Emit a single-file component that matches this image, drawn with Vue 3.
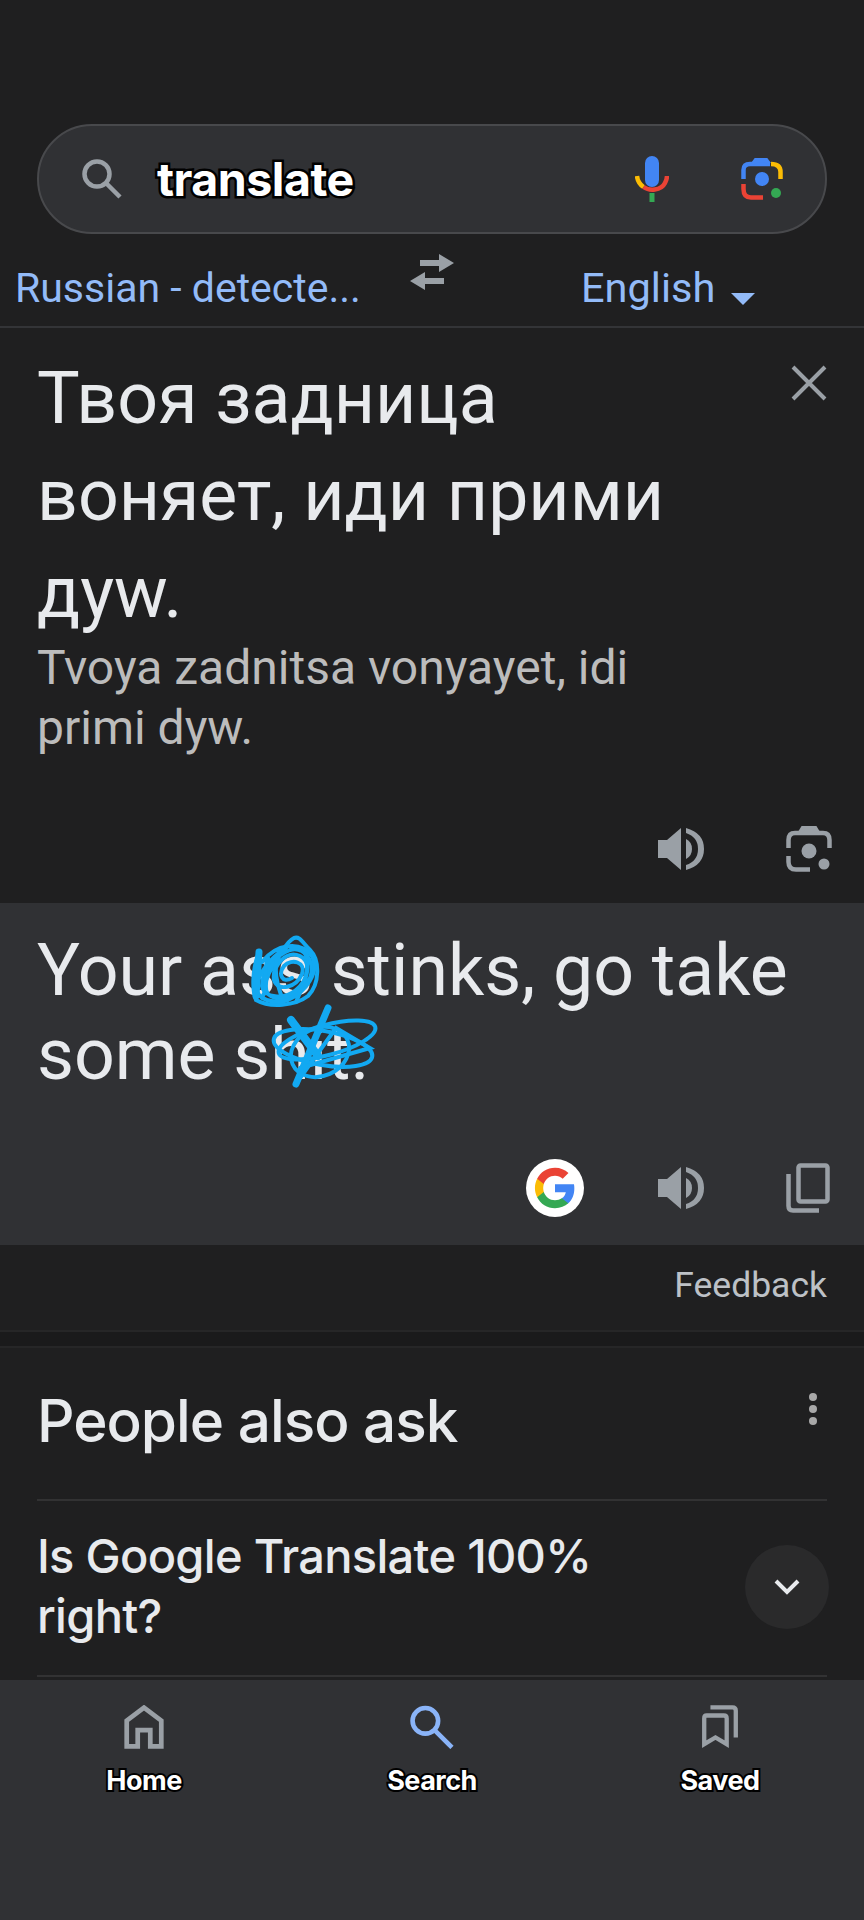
<script setup>
const tabs = [
  { label: 'Home', active: false },
  { label: 'Search', active: true },
  { label: 'Saved', active: false }
]
const knot = [
  [327, 1040, 50, 15, -15], [323, 1048, 50, 17, 10], [320, 1052, 30, 24, -24]
]
</script>

<template>
  <div class="page">
    <div class="search-bar">
      <svg class="search-icon" viewBox="0 0 40 40" fill="none" stroke="#9aa0a6" stroke-width="4.5">
        <circle cx="15" cy="15" r="12.5" />
        <path d="M24 24 L38 38" />
      </svg>
      <span class="query">translate</span>
      <svg class="mic" viewBox="0 0 34 46" fill="none">
        <rect x="10" y="0" width="14" height="31" rx="7" fill="#4285f4" />
        <path d="M2 20 C2.5 25 5 28.5 8.5 31" stroke="#fbbc04" stroke-width="4.5" />
        <path d="M8.5 31 C14 35 26 35 30 27 C31 25 32 22.5 32 20" stroke="#ea4335" stroke-width="4.5" />
        <rect x="14.5" y="37" width="5" height="9" fill="#34a853" />
      </svg>
      <svg class="lens" viewBox="0 0 42 42" fill="none" stroke-width="4.5">
        <path d="M2.5 21 V12 Q2.5 6 9 6 H29" stroke="#4285f4" />
        <path d="M12 6 L15 2 H25 L28 6" fill="#4285f4" stroke="#4285f4" />
        <path d="M30 6 Q39.5 6 39.5 14 V21" stroke="#fbbc04" />
        <path d="M2.5 26 V31 Q2.5 39.5 10 39.5 H22" stroke="#ea4335" />
        <circle cx="21" cy="21" r="7" fill="#4285f4" stroke="none" />
        <circle cx="35" cy="35" r="5" fill="#34a853" stroke="none" />
      </svg>
    </div>

    <div class="lang-bar">
      <span class="lang-from">Russian - detecte...</span>
      <svg class="swap" viewBox="0 0 46 36" fill="#9aa0a6">
        <path d="M30 0 L45 9 L30 18 V12 H11 V6 H30 Z" />
        <path d="M16 18 L1 27 L16 36 V30 H35 V24 H16 Z" />
      </svg>
      <span class="lang-to">English</span>
      <span class="caret"></span>
    </div>

    <div class="source">
      <div class="source-text">
        <div class="source-lines">Твоя задница воняет, иди прими дyw.</div>
        <svg class="close" viewBox="0 0 36 36" stroke="#9aa0a6" stroke-width="4" fill="none">
          <path d="M2 2 L34 34 M34 2 L2 34" />
        </svg>
      </div>
      <div class="translit">Tvoya zadnitsa vonyayet, idi<br />primi dyw.</div>
      <div class="actions source-actions">
        <svg class="speaker" viewBox="0 0 46 44" fill="#9aa0a6">
          <path d="M0 13 H9 L23 1 V43 L9 31 H0 Z" />
          <path d="M28 12 Q34 15 34 22 Q34 29 28 32 Z" />
          <path d="M28 1 Q46 6 46 22 Q46 38 28 43 V38 Q40 34 40 22 Q40 10 28 6 Z" />
        </svg>
        <svg class="lens-grey" viewBox="0 0 46 46" fill="none" stroke="#9aa0a6" stroke-width="4.5">
          <path d="M2.5 22 V14 Q2.5 7 9 7 H37 Q43.5 7 43.5 14 V22" />
          <path d="M14 7 L17 2 H29 L32 7" fill="#9aa0a6" />
          <path d="M2.5 30 V36 Q2.5 43.5 10 43.5 H24" />
          <circle cx="23" cy="25" r="7.5" fill="#9aa0a6" stroke="none" />
          <circle cx="38" cy="38" r="5.5" fill="#9aa0a6" stroke="none" />
        </svg>
      </div>
    </div>

    <div class="target">
      <div class="target-text">Your ass stinks, go take<br />some shit.</div>
      <div class="actions target-actions">
        <span class="g-badge">
          <svg viewBox="0 0 48 48">
            <path fill="#4285f4" d="M45.1 24.5c0-1.6-.1-3.100-.4-4.500H24v8.500h11.800c-.5 2.800-2 5.100-4.400 6.700v5.500h7.100c4.200-3.800 6.600-9.500 6.600-16.200z" />
            <path fill="#34a853" d="M24 46c5.900 0 10.900-2 14.500-5.300l-7.100-5.500c-2 1.300-4.500 2.100-7.400 2.100-5.700 0-10.500-3.800-12.200-9H4.500v5.700C8.100 41.200 15.500 46 24 46z" />
            <path fill="#fbbc05" d="M11.800 28.300c-.4-1.300-.7-2.800-.7-4.300s.3-3 .7-4.300V14H4.500C3 17 2.100 20.400 2.100 24s.9 7 2.400 10l7.300-5.700z" />
            <path fill="#ea4335" d="M24 10.700c3.200 0 6.100 1.100 8.400 3.300l6.300-6.300C34.900 4.100 29.900 2 24 2 15.500 2 8.100 6.800 4.500 14l7.300 5.700c1.700-5.200 6.500-9 12.200-9z" />
          </svg>
        </span>
        <svg class="speaker" viewBox="0 0 46 44" fill="#9aa0a6">
          <path d="M0 13 H9 L23 1 V43 L9 31 H0 Z" />
          <path d="M28 12 Q34 15 34 22 Q34 29 28 32 Z" />
          <path d="M28 1 Q46 6 46 22 Q46 38 28 43 V38 Q40 34 40 22 Q40 10 28 6 Z" />
        </svg>
        <svg class="copy" viewBox="0 0 44 50" fill="none" stroke="#9aa0a6" stroke-width="4.500">
          <rect x="12.500" y="2.500" width="29" height="36" rx="2" />
          <path d="M2.500 11 V43 Q2.500 47.500 7 47.500 H33" />
        </svg>
      </div>
    </div>

    <div class="feedback-row">Feedback</div>
    <div class="band"></div>

    <div class="paa">
      <div class="paa-head">
        <span class="paa-title">People also ask</span>
        <span class="dots"><i></i><i></i><i></i></span>
      </div>
      <div class="question">
        <span>Is Google Translate 100%<br />right?</span>
        <span class="chevron">
          <svg viewBox="0 0 28 18" fill="none" stroke="#e8eaed" stroke-width="4">
            <path d="M3 3 L14 14 L25 3" />
          </svg>
        </span>
      </div>
    </div>

    <nav class="tabbar">
      <div v-for="tab in tabs" :key="tab.label" class="tab">
        <svg v-if="tab.label === 'Home'" class="tab-icon" viewBox="0 0 38 42" fill="none" stroke="#9aa0a6" stroke-width="4.500">
          <path d="M2.500 39.500 V15 L19 2.500 L35.500 15 V39.500 H25 V24 H13 V39.500 Z" />
        </svg>
        <svg v-else-if="tab.label === 'Search'" class="tab-icon" viewBox="0 0 43 42" fill="none" stroke="#8ab4f8" stroke-width="4.500">
          <circle cx="15" cy="15" r="12.500" />
          <path d="M24 24 L41 41" />
        </svg>
        <svg v-else class="tab-icon" viewBox="0 0 38 46" fill="none" stroke="#9aa0a6" stroke-width="4.500">
          <path d="M2.500 14 Q2.500 11 5 11 H23 Q26 11 26 14 V41 L14.250 34 L2.500 41 Z" />
          <path d="M9 2.500 H32 Q35.500 2.500 35.500 6 V34" />
        </svg>
        <span class="tab-label">{{ tab.label }}</span>
      </div>
    </nav>

    <!-- hand scribbles over the text -->
    <svg class="scribbles" viewBox="0 0 864 1920" fill="none" stroke="#12a9f2" stroke-width="4" stroke-linecap="round">
      <path d="M259 952 C252 970 252 990 256 1000 C270 1008 295 1006 308 996 C320 984 320 960 310 950 C302 942 300 936 294 938 C286 942 284 950 278 958 C268 972 262 985 268 994 C280 1004 300 996 310 978 C316 962 304 946 290 950 C274 956 262 972 262 986 C264 998 284 1000 296 990 C308 980 312 962 300 956 C286 950 272 966 274 980 C278 992 296 988 302 974 C306 962 292 958 284 966 C278 974 282 984 292 978" />
      <path d="M262 962 C276 944 300 940 312 956 C320 972 306 992 288 1000 C272 1004 258 1000 256 988 C258 974 270 958 286 948 M268 958 C262 972 270 984 262 998 M304 950 C312 968 304 984 296 1002 M280 950 C272 966 276 984 284 1002" />
      <path d="M259 952 L256 996" stroke-width="7" />
      <ellipse v-for="(e, i) in knot" :key="'k' + i" :cx="e[0]" :cy="e[1]" :rx="e[2]" :ry="e[3]" :transform="`rotate(${e[4]} ${e[0]} ${e[1]})`" />
      <path d="M291 1020 L318 1056" stroke-width="8" />
      <path d="M328 1008 L296 1084" stroke-width="7" />
      <path d="M300 1078 L336 1028 L370 1048 L300 1068" />
    </svg>
  </div>
</template>

<style>
body {
  margin: 0;
  background: #1f1f20;
}
</style>

<style scoped>
.page {
  position: relative;
  width: 864px;
  height: 1920px;
  overflow: hidden;
  display: flex;
  flex-direction: column;
  background: #1f1f20;
  font-family: Roboto, "Noto Sans", sans-serif;
  color: #e8eaed;
}

.search-bar {
  margin: 124px 37px 0;
  height: 110px;
  box-sizing: border-box;
  border: 2px solid #48494c;
  border-radius: 55px;
  background: #303134;
  display: flex;
  align-items: center;
  padding: 0 42px 0 43px;
}

.search-icon {
  width: 40px;
  height: 40px;
  flex: none;
}

.query {
  margin-left: 35px;
  flex: 1;
  font-family: Inter, sans-serif;
  font-size: 46.5px;
  font-weight: 700;
  color: #fff;
  letter-spacing: -0.5px;
  -webkit-text-stroke: 5px #000;
  paint-order: stroke fill;
}

.mic {
  width: 34px;
  height: 46px;
  flex: none;
  margin-right: 72px;
}

.lens {
  width: 42px;
  height: 42px;
  flex: none;
}

.lang-bar {
  height: 94px;
  box-sizing: border-box;
  border-bottom: 2px solid #333437;
  display: flex;
  align-items: flex-start;
  color: #93bbf8;
  font-size: 41.5px;
  padding-left: 15px;
}

.lang-from {
  width: 394px;
  flex: none;
  margin-top: 26px;
  line-height: 56px;
  font-size: 41px;
}

.swap {
  width: 46px;
  height: 36px;
  flex: none;
  margin-top: 20px;
}

.lang-to {
  margin-left: 126px;
  margin-top: 26px;
  line-height: 56px;
}

.caret {
  margin-left: 16px;
  margin-top: 59px;
  width: 0;
  height: 0;
  border-left: 12px solid transparent;
  border-right: 12px solid transparent;
  border-top: 12px solid #93bbf8;
}

.source {
  height: 575px;
  padding: 22px 37px 0;
  box-sizing: border-box;
  display: flex;
  flex-direction: column;
}

.source-text {
  display: flex;
  justify-content: space-between;
}

.source-lines {
  width: 660px;
  font-size: 71.6px;
  line-height: 97px;
}

.close {
  width: 36px;
  height: 36px;
  flex: none;
  margin: 15px 0 0 0;
}

.translit {
  font-size: 48px;
  line-height: 60px;
  color: #bcbcbc;
  margin-top: -3px;
}

.actions {
  display: flex;
  align-items: center;
  justify-content: flex-end;
}

.source-actions {
  margin-top: auto;
  margin-bottom: 31px;
  gap: 82px;
  margin-right: -5px;
}

.speaker {
  width: 46px;
  height: 44px;
  flex: none;
}

.lens-grey {
  width: 46px;
  height: 46px;
  flex: none;
}

.target {
  height: 342px;
  background: #303134;
  padding: 26px 37px 0;
  box-sizing: border-box;
  display: flex;
  flex-direction: column;
}

.target-text {
  font-size: 71.6px;
  line-height: 84px;
}

.target-actions {
  margin-top: auto;
  margin-bottom: 28px;
  margin-right: -3px;
}

.g-badge {
  width: 58px;
  height: 58px;
  border-radius: 50%;
  background: #fff;
  display: flex;
  align-items: center;
  justify-content: center;
  margin-right: 74px;
}

.g-badge svg {
  width: 44px;
  height: 44px;
}

.copy {
  width: 44px;
  height: 50px;
  flex: none;
  margin-left: 82px;
}

.feedback-row {
  height: 87px;
  box-sizing: border-box;
  padding: 0 37px;
  text-align: right;
  font-size: 35.5px;
  line-height: 81px;
  color: #bdc1c6;
  border-bottom: 2px solid #262627;
}

.band {
  height: 14px;
  background: #1a1a1b;
  border-bottom: 2px solid #262627;
}

.paa {
  flex: 1;
  padding: 0 37px;
  box-sizing: border-box;
}

.paa-head {
  height: 153px;
  box-sizing: border-box;
  border-bottom: 2px solid #323233;
  display: flex;
  justify-content: space-between;
  padding-top: 37px;
}

.paa-title {
  font-family: Inter, sans-serif;
  font-weight: 500;
  font-size: 58.5px;
  line-height: 72px;
  letter-spacing: -1px;
}

.dots {
  display: flex;
  flex-direction: column;
  gap: 4px;
  margin: 8px 10px 0 0;
}

.dots i {
  width: 8px;
  height: 8px;
  border-radius: 50%;
  background: #a8a8a8;
}

.question {
  height: 176px;
  box-sizing: border-box;
  border-bottom: 2px solid #323233;
  display: flex;
  align-items: center;
  justify-content: space-between;
  padding-bottom: 2px;
  font-family: Inter, sans-serif;
  font-weight: 500;
  font-size: 47px;
  line-height: 60px;
  letter-spacing: -0.7px;
}

.question > span:first-child {
  margin-top: -3px;
}

.chevron {
  width: 84px;
  height: 84px;
  margin-right: -2px;
  border-radius: 50%;
  background: #2a2a2b;
  display: flex;
  align-items: center;
  justify-content: center;
}

.chevron svg {
  width: 28px;
  height: 18px;
}

.tabbar {
  height: 240px;
  background: #303134;
  display: grid;
  grid-template-columns: repeat(3, 288px);
  flex: none;
}

.tab {
  display: flex;
  flex-direction: column;
  align-items: center;
  padding-top: 25px;
}

.tab-icon {
  height: 44px;
  width: 44px;
}

.tab-label {
  margin-top: 14px;
  font-family: Inter, sans-serif;
  font-size: 27px;
  font-weight: 700;
  line-height: 36px;
  letter-spacing: -0.5px;
  color: #fff;
  -webkit-text-stroke: 4px #000;
  paint-order: stroke fill;
}

.scribbles {
  position: absolute;
  left: 0;
  top: 0;
  width: 864px;
  height: 1920px;
  pointer-events: none;
}
</style>
